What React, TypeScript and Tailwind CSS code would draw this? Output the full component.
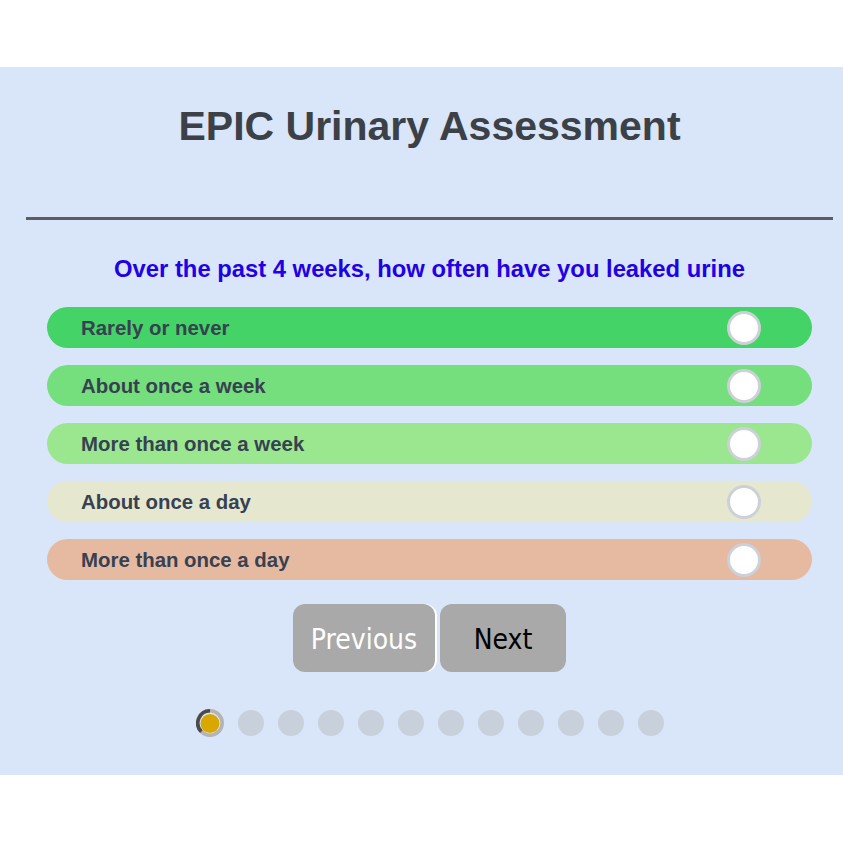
import React from 'react';

const options = [
  { label: 'Rarely or never', bg: 'bg-[#44d366]' },
  { label: 'About once a week', bg: 'bg-[#74df7c]' },
  { label: 'More than once a week', bg: 'bg-[#9ae790]' },
  { label: 'About once a day', bg: 'bg-[#e6e7cf]' },
  { label: 'More than once a day', bg: 'bg-[#e6b9a1]' },
];

function ActiveDot() {
  return (
    <svg width="28" height="28" viewBox="0 0 28 28" className="block">
      <circle cx="14" cy="14" r="12.2" fill="none" stroke="#b4b4b4" strokeWidth="3.6" />
      <path d="M 14 1.8 A 12.2 12.2 0 0 0 5.37 22.63" fill="none" stroke="#4b4b4b" strokeWidth="3.6" />
      <circle cx="14" cy="14.5" r="9.5" fill="#d9a800" />
    </svg>
  );
}

export default function App() {
  return (
    <div className="min-h-[843px] bg-white pt-[67px] font-['Liberation_Sans',Arial,sans-serif]">
      <div className="bg-[#d9e5f9] pl-[26px] pr-[10px] pt-[36px] pb-[38px]">
        <h1 className="text-center text-[41px] leading-[46px] font-bold text-[#3c4147]">
          EPIC Urinary Assessment
        </h1>

        <div className="mt-[68px] h-[3px] bg-[#5a5e63]" />

        <h2 className="mt-[35px] text-center text-[23.8px] leading-[28px] font-bold text-[#2200e6]">
          Over the past 4 weeks, how often have you leaked urine
        </h2>

        <div className="mx-[21px] mt-[24px] flex flex-col gap-[17px]">
          {options.map((o) => (
            <div
              key={o.label}
              className={`flex h-[41px] items-center justify-between rounded-full pl-[34px] pr-[51px] ${o.bg}`}
            >
              <span className="pt-[2px] text-[20.4px] font-bold text-[#374151]">{o.label}</span>
              <span className="h-[34px] w-[34px] rounded-full border-[3px] border-[#ccd0d7] bg-white" />
            </div>
          ))}
        </div>

        <div className="mt-[24px] flex justify-center gap-[5px] font-['DejaVu_Sans_Condensed','DejaVu_Sans',sans-serif]">
          <button className="h-[68px] w-[142px] rounded-[12px] bg-[#a9a9a9] pt-[3px] text-[28px] text-white shadow-[2px_0_0_#ffffff]">
            Previous
          </button>
          <button className="h-[68px] w-[126px] rounded-[12px] bg-[#a9a9a9] pt-[3px] text-[28px] text-black">
            Next
          </button>
        </div>

        <div className="mt-[37px] flex items-center justify-center gap-[14px]">
          <ActiveDot />
          {Array.from({ length: 11 }).map((_, i) => (
            <span key={i} className="h-[26px] w-[26px] rounded-full bg-[#c8d0dc]" />
          ))}
        </div>
      </div>
    </div>
  );
}
